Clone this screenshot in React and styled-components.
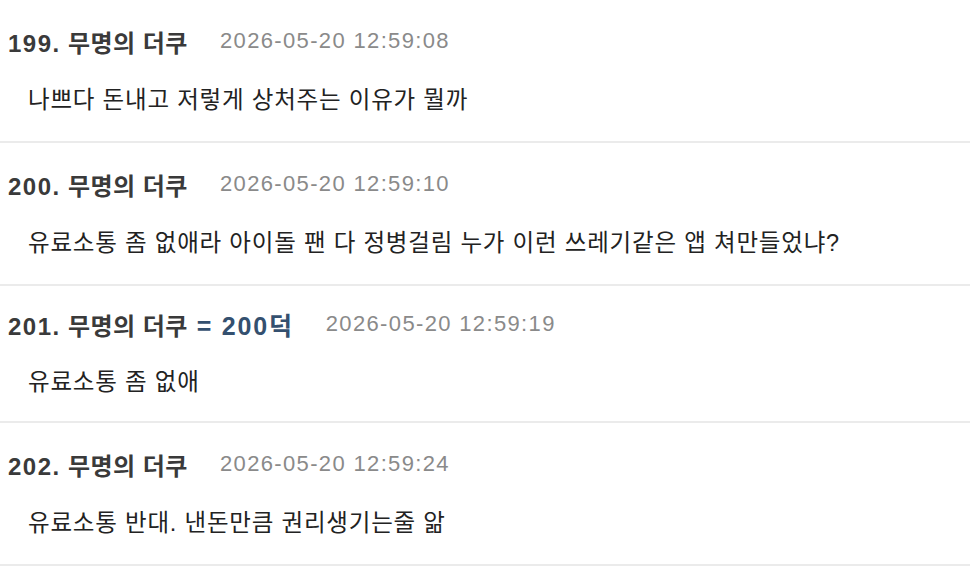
import React from "react";
import styled, { createGlobalStyle } from "styled-components";

const GlobalStyle = createGlobalStyle`
  html, body {
    margin: 0;
    padding: 0;
    background: #ffffff;
  }
  body {
    font-family: "Liberation Sans", "Noto Sans CJK KR", sans-serif;
  }
`;

const Lista = styled.div`
  display: flex;
  flex-direction: column;
  width: 970px;
`;

const Comentario = styled.div`
  display: flex;
  flex-direction: column;
  gap: ${(props) => (props.$tight ? "17px" : "18px")};
  padding: ${(props) => (props.$tight ? "17px 8px 19px" : "20px 8px 21px")};
  border-bottom: 2px solid #ebebeb;
`;

const Cabecalho = styled.div`
  display: flex;
  align-items: center;
  gap: 32px;
  height: 42px;
`;

const Autor = styled.span`
  font-size: 24px;
  font-weight: 700;
  letter-spacing: 0.5px;
  color: #3a3a3a;
  white-space: nowrap;
`;

const Numero = styled.span`
  letter-spacing: 1.5px;
`;

const Pontos = styled.span`
  font-size: 25px;
  letter-spacing: 1.8px;
  color: #34506f;
`;

const Data = styled.span`
  font-size: 22px;
  letter-spacing: 1.35px;
  color: #8a8a8a;
  white-space: nowrap;
`;

const Texto = styled.div`
  padding-left: 20px;
  font-size: 23.5px;
  letter-spacing: 0.8px;
  line-height: 40px;
  color: #222222;
  white-space: nowrap;
`;

const comentarios = [
  {
    num: 199,
    data: "2026-05-20 12:59:08",
    texto: "나쁘다 돈내고 저렇게 상처주는 이유가 뭘까",
  },
  {
    num: 200,
    data: "2026-05-20 12:59:10",
    texto:
      "유료소통 좀 없애라 아이돌 팬 다 정병걸림 누가 이런 쓰레기같은 앱 쳐만들었냐?",
  },
  {
    num: 201,
    pontos: "= 200덕",
    data: "2026-05-20 12:59:19",
    texto: "유료소통 좀 없애",
  },
  {
    num: 202,
    data: "2026-05-20 12:59:24",
    texto: "유료소통 반대. 낸돈만큼 권리생기는줄 앎",
  },
];

function App() {
  return (
    <>
      <GlobalStyle />
      <Lista>
        {comentarios.map((c) => (
          <Comentario key={c.num} $tight={!!c.pontos}>
            <Cabecalho>
              <Autor>
                <Numero>{c.num}.</Numero> 무명의 더쿠
                {c.pontos && <Pontos> {c.pontos}</Pontos>}
              </Autor>
              <Data>{c.data}</Data>
            </Cabecalho>
            <Texto>{c.texto}</Texto>
          </Comentario>
        ))}
      </Lista>
    </>
  );
}

export default App;
